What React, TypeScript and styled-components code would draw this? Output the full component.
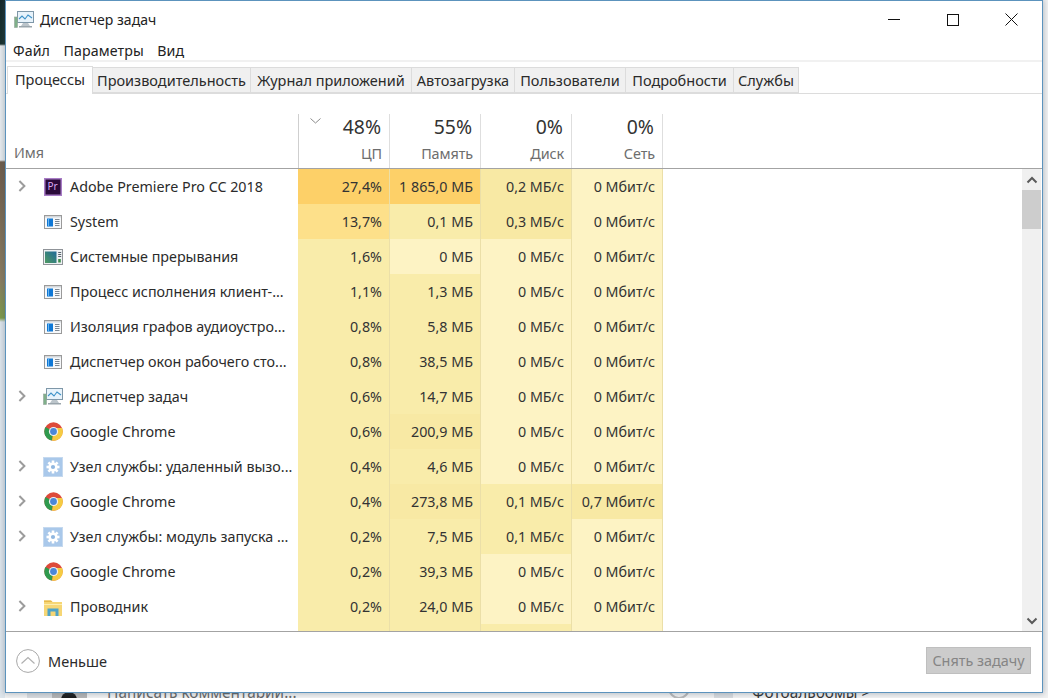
import React from "react";
import styled, { createGlobalStyle } from "styled-components";

const Global = createGlobalStyle`
  html, body { margin: 0; padding: 0; background: #fff; }
  body { font-family: "Noto Sans", "Open Sans", sans-serif; font-size: 14px; color: #2b2b2b; }
  * { box-sizing: border-box; }
`;

const Desktop = styled.div`
  position: relative;
  width: 1048px;
  height: 698px;
  overflow: hidden;
  background: #f3f3f3;
`;
const LeftStrip = styled.div`
  position: absolute;
  left: 0;
  top: 0;
  width: 5px;
  height: 698px;
  background: linear-gradient(to bottom, #12262a 0, #16302c 44px, #e8ecef 46px, #e8ecef 160px, #6e5a48 162px, #8a7c5e 280px, #7d9a48 318px, #dfe6ec 322px, #dfe6ec 100%);
`;
const GreyBand = styled.div<{ $left: number; $width: number }>`
  position: absolute;
  left: ${p => p.$left}px;
  top: 692px;
  width: ${p => p.$width}px;
  height: 6px;
  background: #d9dcdf;
`;
const Avatar = styled.div`
  position: absolute;
  left: 52px;
  top: 686px;
  width: 35px;
  height: 20px;
  background: #b5b5b5;
  &::after {
    content: "";
    position: absolute;
    left: 9px;
    top: 6px;
    width: 16px;
    height: 16px;
    border-radius: 50%;
    background: #1a1a1a;
  }
`;
const StripText = styled.div<{ $left: number; $dark?: boolean }>`
  position: absolute;
  left: ${p => p.$left}px;
  top: 682px;
  font-size: 15.4px;
  line-height: 22px;
  white-space: nowrap;
  color: ${p => (p.$dark ? "#333" : "#666")};
`;
const StripCircle = styled.div`
  position: absolute;
  left: 668px;
  top: 677px;
  width: 22px;
  height: 22px;
  border: 2px solid #b9b9b9;
  border-radius: 50%;
`;
const Window = styled.div`
  position: absolute;
  left: 5px;
  top: 0;
  width: 1038px;
  height: 693px;
  background: #fff;
  border: 1px solid #5c93bd;
  box-shadow: 0 0 6px 1px rgba(70, 90, 110, 0.35);
  display: flex;
  flex-direction: column;
`;
const TitleBar = styled.div`
  height: 37px;
  flex: none;
  display: flex;
  align-items: center;
  padding: 0 1px 0 9px;
`;
const TitleText = styled.div`
  margin-left: 6px;
  font-size: 14px;
  letter-spacing: 0.05px;
  color: #222;
  flex: 1;
`;
const WinButtons = styled.div`
  display: flex;
  align-items: center;
`;
const WinButton = styled.div`
  width: 59px;
  height: 36px;
  display: flex;
  align-items: center;
  justify-content: center;
`;
const MenuBar = styled.div`
  height: 24px;
  flex: none;
  display: flex;
  align-items: center;
  gap: 13.5px;
  padding: 2px 0 0 7px;
  border-bottom: 2px solid #f1f1f1;
  font-size: 14.2px;
  letter-spacing: 0.1px;
  color: #222;
`;
const Tabs = styled.div`
  height: 32px;
  flex: none;
  display: flex;
  align-items: flex-end;
  padding-left: 1px;
  border-bottom: 1px solid #dcdcdc;
`;
const Tab = styled.div<{ $active?: boolean; $w: number }>`
  width: ${p => p.$w}px;
  height: ${p => (p.$active ? 28 : 26)}px;
  margin-bottom: ${p => (p.$active ? -1 : 0)}px;
  display: flex;
  align-items: center;
  justify-content: center;
  font-size: 14.5px;
  white-space: nowrap;
  color: #2a2a2a;
  background: ${p => (p.$active ? "#fff" : "#f0f0f0")};
  border: 1px solid #dcdcdc;
  border-left: ${p => (p.$active ? "1px solid #dcdcdc" : "none")};
  border-bottom: ${p => (p.$active ? "none" : "1px solid #dcdcdc")};
  padding-bottom: ${p => (p.$active ? 3 : 0)}px;
`;
const headCols = "293px 91px 91px 91px 91px 1fr";
const rowCols = "292px 92px 91px 91px 91px 1fr";
const Header = styled.div`
  height: 75px;
  flex: none;
  display: grid;
  grid-template-columns: ${headCols};
  border-bottom: 1px solid #a3a3a3;
`;
const NameHead = styled.div`
  position: relative;
  display: flex;
  align-items: flex-end;
  padding: 0 0 6px 8px;
  font-size: 14.3px;
  color: #6d6d6d;
  &::after {
    content: "";
    position: absolute;
    right: 0;
    bottom: 0;
    width: 1px;
    height: 54px;
    background: #cfcfcf;
  }
`;
const HeadCell = styled.div`
  position: relative;
  margin-top: 20px;
  display: flex;
  flex-direction: column;
  align-items: flex-end;
  padding-right: 7px;
  border-right: 1px solid #dedede;
`;
const SortMark = styled.svg`
  position: absolute;
  left: 11px;
  top: 4px;
`;
const HeadPct = styled.div`
  font-size: 19.4px;
  line-height: 26px;
  padding-right: 1px;
  color: #333;
`;
const HeadLabel = styled.div`
  margin-top: 2px;
  font-size: 14.4px;
  letter-spacing: -0.1px;
  line-height: 24px;
  color: #6d6d6d;
`;
const TableArea = styled.div`
  height: 463px;
  flex: none;
  position: relative;
  overflow: hidden;
  border-bottom: 1px solid #a3a3a3;
`;
const Row = styled.div`
  height: 35px;
  display: grid;
  grid-template-columns: ${rowCols};
`;
const NameCell = styled.div`
  display: flex;
  align-items: center;
  padding-left: 12px;
  white-space: nowrap;
  font-size: 14.3px;
  color: #2b2b2b;
`;
const Chevron = styled.span`
  width: 26px;
  flex: none;
  display: flex;
  align-items: center;
`;
const IconSlot = styled.span`
  width: 26px;
  flex: none;
  display: flex;
  align-items: center;
`;
const heat: Record<number, string> = {
  0: "#fdf3c4",
  1: "#f9ecaa",
  2: "#f8e9a4",
  3: "#fde08a",
  4: "#fdd068",
};
const Cell = styled.div<{ $h: number }>`
  display: flex;
  align-items: center;
  justify-content: flex-end;
  padding-right: 7px;
  white-space: nowrap;
  font-size: 14.3px;
  color: #333;
  background: ${p => heat[p.$h]};
  border-right: 1px solid #ebdfa8;
`;
const Scrollbar = styled.div`
  position: absolute;
  right: 1px;
  top: 0;
  bottom: 0;
  width: 19px;
  background: #f0f0f0;
  display: flex;
  flex-direction: column;
  justify-content: space-between;
`;
const ScrollArrow = styled.div`
  height: 21px;
  display: flex;
  align-items: center;
  justify-content: center;
`;
const ScrollThumb = styled.div`
  position: absolute;
  left: 0;
  right: 0;
  top: 21px;
  height: 39px;
  background: #cdcdcd;
`;
const Footer = styled.div`
  flex: 1;
  display: flex;
  align-items: center;
  justify-content: space-between;
  padding: 0 11px 3px 10px;
`;
const LessToggle = styled.div`
  display: flex;
  align-items: center;
  gap: 8px;
  padding-top: 1px;
  font-size: 14.5px;
  color: #2b2b2b;
`;
const EndTask = styled.div`
  width: 105px;
  height: 27px;
  display: flex;
  align-items: center;
  justify-content: center;
  background: #cccccc;
  border: 1px solid #bfbfbf;
  font-size: 14.4px;
  color: #858585;
`;

const AppIcon = () => (
  <svg width="18" height="14" viewBox="0 0 18 14">
    <rect x="0.5" y="0.5" width="17" height="13" fill="#f6f8fa" stroke="#9a9a9a" />
    <rect x="1" y="1" width="16" height="1.5" fill="#d3d7db" />
    <rect x="3" y="3.5" width="6" height="8" fill="#0f78d6" />
    <path d="M4.5 3.5v8" stroke="#6cb6ef" />
    <path d="M11 4.5h4.5M11 6.5h4.5M11 8.5h4.5M11 10.5h4.5" stroke="#7c8894" />
  </svg>
);
const InterruptIcon = () => (
  <svg width="20" height="16" viewBox="0 0 20 16" style={{ marginLeft: -1 }}>
    <defs>
      <linearGradient id="intg" x1="0" y1="1" x2="1" y2="0">
        <stop offset="0" stopColor="#4f9a62" />
        <stop offset="1" stopColor="#1f6a99" />
      </linearGradient>
    </defs>
    <rect x="0.5" y="0.5" width="19" height="15" fill="#eef1f3" stroke="#8f9398" />
    <rect x="2" y="2.5" width="11.5" height="11.5" fill="url(#intg)" />
    <path d="M15.2 3.5h3M15.2 5.5h3M15.2 7.5h3" stroke="#59636d" />
    <rect x="15.2" y="10" width="2.6" height="3.5" fill="#3e8e4c" />
  </svg>
);
const TaskIcon = ({ size = 20 }: { size?: number }) => (
  <svg width={size} height={size * 0.85} viewBox="0 0 20 17" style={{ marginLeft: -1 }}>
    <rect x="3.5" y="0.5" width="16" height="11" fill="#e8f3fb" stroke="#7e97a8" />
    <path d="M5 8l3-3 3 3 3-4 4 3" fill="none" stroke="#3f93c9" strokeWidth="1.1" />
    <path d="M9 12h5l2 3H7z" fill="#bcc5cb" />
    <rect x="5" y="15" width="13" height="1.5" fill="#9aa5ac" />
    <rect x="0.5" y="6" width="3" height="10.5" fill="#7fb08a" stroke="#93a39a" strokeWidth="0.6" />
  </svg>
);
const PremiereIcon = () => (
  <svg width="18" height="18" viewBox="0 0 18 18">
    <rect x="0.75" y="0.75" width="16.5" height="16.5" fill="#2a0a3a" stroke="#a87cc6" strokeWidth="1.5" />
    <text x="3.4" y="12.2" fontSize="10" fontFamily="Noto Sans, sans-serif" fill="#d9a8f2">Pr</text>
  </svg>
);
const ChromeIcon = () => (
  <svg width="19" height="19" viewBox="0 0 19 19" style={{ marginLeft: -0.5 }}>
    <circle cx="9.5" cy="9.5" r="9.2" fill="#de4a3a" />
    <path d="M9.5 9.5L1.5 5 A9.2 9.2 0 0 0 8 18.6z" fill="#2f9a4e" />
    <path d="M9.5 9.5L8 18.6 A9.2 9.2 0 0 0 18.1 6H9.5z" fill="#f5cb42" />
    <circle cx="9.5" cy="9.5" r="4.6" fill="#f2f2f2" />
    <circle cx="9.5" cy="9.5" r="3.4" fill="#4a87d9" />
  </svg>
);
const GearIcon = () => (
  <svg width="20" height="20" viewBox="0 0 20 20" style={{ marginLeft: -1 }}>
    <rect width="20" height="20" fill="#a9c8ea" />
    <rect x="0.5" y="0.5" width="19" height="19" fill="none" stroke="#c5d9ef" />
    <g fill="#fff">
      <circle cx="10" cy="10" r="4.6" />
      <rect x="8.7" y="3.5" width="2.6" height="13" />
      <rect x="3.5" y="8.7" width="13" height="2.6" />
      <rect x="8.7" y="3.5" width="2.6" height="13" transform="rotate(45 10 10)" />
      <rect x="8.7" y="3.5" width="2.6" height="13" transform="rotate(-45 10 10)" />
    </g>
    <circle cx="10" cy="10" r="2.1" fill="#8fb6e0" />
  </svg>
);
const FolderIcon = () => (
  <svg width="18" height="18" viewBox="0 0 18 18">
    <path d="M0 2.5h7l1.5 1.5H18v14H0z" fill="#f6d675" />
    <path d="M0 2.5h7l1.5 1.5H0z" fill="#e6b84a" />
    <rect x="0" y="6" width="18" height="1" fill="#fdeeb0" />
    <path d="M3.5 18v-7.5h11V18h-3v-4.5h-5V18z" fill="#4fa3c7" />
  </svg>
);
const RowChevron = () => (
  <svg width="9" height="12" viewBox="0 0 9 12" style={{ marginTop: -2 }}>
    <path d="M1.4 1l5 5-5 5" fill="none" stroke="#9c9c9c" strokeWidth="2" />
  </svg>
);

const icons: Record<string, React.ReactElement> = {
  pr: <PremiereIcon />,
  app: <AppIcon />,
  irq: <InterruptIcon />,
  task: <TaskIcon />,
  chrome: <ChromeIcon />,
  gear: <GearIcon />,
  folder: <FolderIcon />,
};

type R = {
  exp: boolean;
  icon: string;
  name: string;
  vals: [string, string, string, string];
  h: [number, number, number, number];
};
const rows: R[] = [
  { exp: true, icon: "pr", name: "Adobe Premiere Pro CC 2018", vals: ["27,4%", "1 865,0 МБ", "0,2 МБ/с", "0 Мбит/с"], h: [4, 4, 2, 0] },
  { exp: false, icon: "app", name: "System", vals: ["13,7%", "0,1 МБ", "0,3 МБ/с", "0 Мбит/с"], h: [3, 1, 2, 0] },
  { exp: false, icon: "irq", name: "Системные прерывания", vals: ["1,6%", "0 МБ", "0 МБ/с", "0 Мбит/с"], h: [1, 0, 0, 0] },
  { exp: false, icon: "app", name: "Процесс исполнения клиент-...", vals: ["1,1%", "1,3 МБ", "0 МБ/с", "0 Мбит/с"], h: [1, 1, 0, 0] },
  { exp: false, icon: "app", name: "Изоляция графов аудиоустро...", vals: ["0,8%", "5,8 МБ", "0 МБ/с", "0 Мбит/с"], h: [1, 1, 0, 0] },
  { exp: false, icon: "app", name: "Диспетчер окон рабочего сто...", vals: ["0,8%", "38,5 МБ", "0 МБ/с", "0 Мбит/с"], h: [1, 1, 0, 0] },
  { exp: true, icon: "task", name: "Диспетчер задач", vals: ["0,6%", "14,7 МБ", "0 МБ/с", "0 Мбит/с"], h: [1, 1, 0, 0] },
  { exp: false, icon: "chrome", name: "Google Chrome", vals: ["0,6%", "200,9 МБ", "0 МБ/с", "0 Мбит/с"], h: [1, 2, 0, 0] },
  { exp: true, icon: "gear", name: "Узел службы: удаленный вызо...", vals: ["0,4%", "4,6 МБ", "0 МБ/с", "0 Мбит/с"], h: [1, 1, 0, 0] },
  { exp: true, icon: "chrome", name: "Google Chrome", vals: ["0,4%", "273,8 МБ", "0,1 МБ/с", "0,7 Мбит/с"], h: [1, 2, 1, 2] },
  { exp: true, icon: "gear", name: "Узел службы: модуль запуска ...", vals: ["0,2%", "7,5 МБ", "0,1 МБ/с", "0 Мбит/с"], h: [1, 1, 1, 0] },
  { exp: false, icon: "chrome", name: "Google Chrome", vals: ["0,2%", "39,3 МБ", "0 МБ/с", "0 Мбит/с"], h: [1, 1, 0, 0] },
  { exp: true, icon: "folder", name: "Проводник", vals: ["0,2%", "24,0 МБ", "0 МБ/с", "0 Мбит/с"], h: [1, 1, 0, 0] },
];
const tabs: [string, number][] = [
  ["Процессы", 86],
  ["Производительность", 158],
  ["Журнал приложений", 161],
  ["Автозагрузка", 103],
  ["Пользователи", 111],
  ["Подробности", 108],
  ["Службы", 65],
];
const heads: [string, string][] = [
  ["48%", "ЦП"],
  ["55%", "Память"],
  ["0%", "Диск"],
  ["0%", "Сеть"],
];

export default function App() {
  return (
    <Desktop>
      <Global />
      <LeftStrip />
      <GreyBand $left={27} $width={26} />
      <GreyBand $left={714} $width={19} />
      <Avatar />
      <StripText $left={107}>Написать комментарий...</StripText>
      <StripCircle />
      <StripText $left={752} $dark>Фотоальбомы &gt;</StripText>
      <Window>
        <TitleBar>
          <TaskIcon size={20} />
          <TitleText>Диспетчер задач</TitleText>
          <WinButtons>
            <WinButton>
              <svg width="12" height="12" viewBox="0 0 12 12"><path d="M0 5.5h12" stroke="#111" /></svg>
            </WinButton>
            <WinButton>
              <svg width="12" height="12" viewBox="0 0 12 12"><rect x="0.5" y="0.5" width="11" height="11" fill="none" stroke="#111" /></svg>
            </WinButton>
            <WinButton>
              <svg width="13" height="13" viewBox="0 0 13 13"><path d="M0.5 0.5l12 12M12.5 0.5l-12 12" stroke="#111" /></svg>
            </WinButton>
          </WinButtons>
        </TitleBar>
        <MenuBar>
          <span>Файл</span>
          <span>Параметры</span>
          <span>Вид</span>
        </MenuBar>
        <Tabs>
          {tabs.map(([t, w], i) => (
            <Tab key={t} $active={i === 0} $w={w}>{t}</Tab>
          ))}
        </Tabs>
        <Header>
          <NameHead>Имя</NameHead>
          {heads.map(([p, l], i) => (
            <HeadCell key={l}>
              {i === 0 && (
                <SortMark width="11" height="6" viewBox="0 0 11 6">
                  <path d="M0.5 0.5l5 4.5 5-4.5" fill="none" stroke="#8a8a8a" />
                </SortMark>
              )}
              <HeadPct>{p}</HeadPct>
              <HeadLabel>{l}</HeadLabel>
            </HeadCell>
          ))}
          <div />
        </Header>
        <TableArea>
          {rows.map((r, i) => (
            <Row key={i}>
              <NameCell>
                <Chevron>{r.exp && <RowChevron />}</Chevron>
                <IconSlot>{icons[r.icon]}</IconSlot>
                {r.name}
              </NameCell>
              {r.vals.map((v, j) => (
                <Cell key={j} $h={r.h[j]}>{v}</Cell>
              ))}
              <div />
            </Row>
          ))}
          <Row>
            <div />
            <Cell $h={1} />
            <Cell $h={1} />
            <Cell $h={1} />
            <Cell $h={0} />
            <div />
          </Row>
          <Scrollbar>
            <ScrollArrow>
              <svg width="12" height="8" viewBox="0 0 12 8"><path d="M1.5 6.5L6 2l4.5 4.5" fill="none" stroke="#5a5a5a" strokeWidth="2" /></svg>
            </ScrollArrow>
            <ScrollThumb />
            <ScrollArrow>
              <svg width="12" height="8" viewBox="0 0 12 8"><path d="M1.5 1.5L6 6l4.5-4.5" fill="none" stroke="#5a5a5a" strokeWidth="2" /></svg>
            </ScrollArrow>
          </Scrollbar>
        </TableArea>
        <Footer>
          <LessToggle>
            <svg width="24" height="24" viewBox="0 0 24 24">
              <circle cx="12" cy="12" r="11.4" fill="#fff" stroke="#a8a8a8" />
              <path d="M5.5 14.5L12 8.5l6.5 6" fill="none" stroke="#b0b0b0" strokeWidth="1.2" />
            </svg>
            Меньше
          </LessToggle>
          <EndTask>Снять задачу</EndTask>
        </Footer>
      </Window>
    </Desktop>
  );
}
